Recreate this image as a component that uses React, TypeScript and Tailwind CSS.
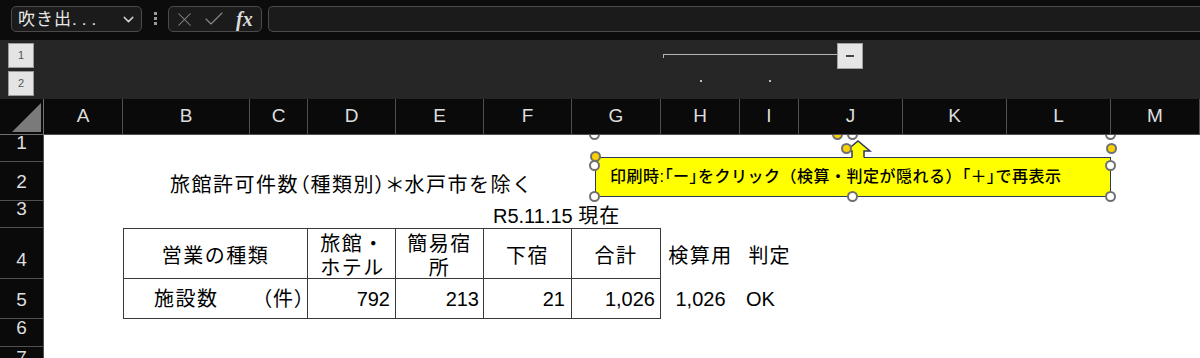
import React from "react";
import { ChevronDown, X, Check } from "lucide-react";

const hdr =
  "flex items-center justify-center border-r border-b border-[#505050] bg-[#0a0a0a] text-[#dedede] text-[19px]";
const rowh =
  "flex items-end justify-center pb-[8px] border-r border-b border-[#505050] bg-[#0a0a0a] text-[#dedede] text-[19px] leading-[20px]";
const palt = "[font-feature-settings:'palt']";

function FormulaBar() {
  return (
    <div className="h-[40px] flex items-start pt-[6px] pl-[11px] bg-[#0c0c0c]">
      <div className="w-[131px] h-[26px] rounded-[5px] border border-[#4a4a4a] bg-[#1b1b1b] flex items-center justify-between pl-[6px] pr-[4px]">
        <span className="text-[17px] leading-none text-[#e8e8e8] tracking-[1px]">
          吹き出<span className="tracking-[5px]">...</span>
        </span>
        <ChevronDown size={17} strokeWidth={2} className="text-[#d0d0d0]" />
      </div>
      <div className="ml-[12px] mt-[6px] flex flex-col gap-[2px]">
        <div className="w-[3px] h-[3px] bg-[#9a9a9a]" />
        <div className="w-[3px] h-[3px] bg-[#9a9a9a]" />
        <div className="w-[3px] h-[3px] bg-[#9a9a9a]" />
      </div>
      <div className="ml-[11px] w-[94px] h-[26px] rounded-[5px] border border-[#4a4a4a] bg-[#1b1b1b] flex items-center pl-[4px] gap-[6px]">
        <X size={23} strokeWidth={1.1} className="text-[#8a8a8a]" />
        <Check size={24} strokeWidth={1.1} className="text-[#8a8a8a]" />
        <span className="font-['Liberation_Serif',serif] italic font-bold text-[20px] leading-none text-[#dcdcdc] ml-[4px]">
          fx
        </span>
      </div>
      <div className="ml-[6px] flex-1 h-[26px] rounded-l-[5px] border border-r-0 border-[#4a4a4a] bg-[#1b1b1b]" />
    </div>
  );
}

function LevelBtn({ children }: { children: React.ReactNode }) {
  return (
    <div className="w-[26px] h-[25px] bg-[#e4e4e4] border border-[#9a9a9a] flex items-center justify-center text-[11px] text-[#555]">
      {children}
    </div>
  );
}

function Outline() {
  return (
    <div className="h-[59px] bg-[#262626] flex">
      <div className="w-[44px] flex flex-col gap-[3px] pt-[3px] pl-[8px]">
        <LevelBtn>1</LevelBtn>
        <LevelBtn>2</LevelBtn>
      </div>
      <div className="flex-1 flex flex-col">
        <div className="h-[29px] flex items-start pl-[619px]">
          <div className="mt-[14px] w-[174px] h-[4px] border-t-[1.5px] border-l-[1.5px] border-[#b4b4b4]" />
          <div className="mt-[3px] w-[26px] h-[26px] bg-[#e6e6e6] border border-[#a0a0a0] flex items-center justify-center">
            <div className="w-[8px] h-[1.5px] bg-[#444]" />
          </div>
        </div>
        <div className="flex pl-[656px] gap-[67px] pt-[11px]">
          <div className="w-[2px] h-[2px] bg-[#bdbdbd]" />
          <div className="w-[2px] h-[2px] bg-[#bdbdbd]" />
        </div>
      </div>
    </div>
  );
}

function Callout() {
  const white =
    "absolute w-[11px] h-[11px] rounded-full bg-white border-2 border-[#707070]";
  const yellow =
    "absolute w-[11px] h-[11px] rounded-full bg-[#f7d100] border-2 border-[#707070]";
  return (
    <div className="absolute left-[44px] top-[36px] right-0 bottom-0 overflow-hidden pointer-events-none">
      <div className="absolute left-[551px] top-[22px] w-[516px] h-[40px] bg-[#ffff00] border-[1.5px] border-[#2c3a5c] flex items-center pl-[14px]">
        <span className="text-[16px] font-medium text-black whitespace-nowrap tracking-[0.5px]">
          印刷時:<span className={palt}>「</span>ー<span className={palt}>」</span>をクリック（検算・判定が隠れる）<span className={palt}>「</span>＋<span className={palt}>」</span>で再表示
        </span>
      </div>
      <svg
        className="absolute left-[796px] top-[3px]"
        width="36"
        height="22"
        viewBox="0 0 36 22"
      >
        <polygon
          points="12,21 12,13 6,13 18,3 30,13 24,13 24,21"
          fill="#ffff00"
        />
        <polyline
          points="12,19.6 12,13 6,13 18,3 30,13 24,13 24,19.6"
          fill="none"
          stroke="#2c3a5c"
          strokeWidth="1.5"
        />
      </svg>
      <div className={`${white} left-[545px] top-[-6px]`} />
      <div className={`${white} left-[803px] top-[-6px]`} />
      <div className={`${white} left-[1061px] top-[-6px]`} />
      <div className={`${white} left-[545px] top-[25px]`} />
      <div className={`${white} left-[1061px] top-[25px]`} />
      <div className={`${white} left-[545px] top-[56px]`} />
      <div className={`${white} left-[803px] top-[56px]`} />
      <div className={`${white} left-[1061px] top-[56px]`} />
      <div className={`${yellow} left-[546px] top-[16px]`} />
      <div className={`${yellow} left-[1062px] top-[8px]`} />
      <div className={`${yellow} left-[788px] top-[-6px]`} />
      <div className={`${yellow} left-[797px] top-[8px]`} />
    </div>
  );
}

function Sheet() {
  const letters = ["A", "B", "C", "D", "E", "F", "G", "H", "I", "J", "K", "L", "M"];
  const tb = "border-[#3a3a3a]";
  const cjk = "text-[20px] tracking-[1.5px] text-black";
  const num = "text-[20px] text-black";
  return (
    <div className="relative">
      <div className="grid grid-cols-[44px_79px_127px_58px_88px_88px_88px_89px_79px_59px_104px_104px_104px_1fr] grid-rows-[36px_27px_39px_27px_51px_40px_28px_40px] bg-white">
        {/* header row */}
        <div className="relative border-r border-b border-[#707070] bg-[#0a0a0a]">
          <svg className="absolute left-[12px] top-[4px]" width="30" height="30" viewBox="0 0 30 30">
            <polygon points="29,0 29,29 0,29" fill="#7a7a7a" />
          </svg>
        </div>
        {letters.map((l) => (
          <div key={l} className={hdr}>
            {l}
          </div>
        ))}

        {/* row 1 */}
        <div className={rowh}>1</div>
        <div className="col-span-13" />

        {/* row 2 */}
        <div className={rowh}>2</div>
        <div />
        <div className="col-span-12 flex items-start pt-[13px] pl-[47px]">
          <span className={`${cjk} leading-[20px] whitespace-nowrap`}>
            旅館許可件数<span className={palt}>（</span>種類別<span className={palt}>）＊</span>水戸市を除く
          </span>
        </div>

        {/* row 3 */}
        <div className={rowh}>3</div>
        <div className="col-span-5" />
        <div className="col-span-8 flex items-start pt-[5px] pl-[9px]">
          <span className={`${num} leading-[20px] whitespace-nowrap`}>
            R5.11.15 <span className="tracking-[1px]">現在</span>
          </span>
        </div>

        {/* row 4 */}
        <div className={rowh}>4</div>
        <div />
        <div className={`col-span-2 border-l border-t border-r border-b ${tb} flex items-center justify-center pt-[6px]`}>
          <span className={`${cjk} leading-[23.5px]`}>営業の種類</span>
        </div>
        <div className={`border-t border-r border-b ${tb} flex flex-col items-center justify-center pt-[6px] pl-[2px]`}>
          <span className={`${cjk} leading-[23.5px]`}>旅館・</span>
          <span className={`${cjk} leading-[23.5px]`}>ホテル</span>
        </div>
        <div className={`border-t border-r border-b ${tb} flex flex-col items-center justify-center pt-[6px]`}>
          <span className={`${cjk} leading-[23.5px]`}>簡易宿</span>
          <span className={`${cjk} leading-[23.5px]`}>所</span>
        </div>
        <div className={`border-t border-r border-b ${tb} flex items-center justify-center pt-[6px]`}>
          <span className={`${cjk} leading-[23.5px]`}>下宿</span>
        </div>
        <div className={`border-t border-r border-b ${tb} flex items-center justify-center pt-[6px]`}>
          <span className={`${cjk} leading-[23.5px]`}>合計</span>
        </div>
        <div className="flex items-center justify-center pt-[6px]">
          <span className={`${cjk} leading-[23.5px] tracking-[0px]`}>検算用</span>
        </div>
        <div className="flex items-center justify-center pt-[6px]">
          <span className={`${cjk} leading-[23.5px] tracking-[1px]`}>判定</span>
        </div>
        <div className="col-span-4" />

        {/* row 5 */}
        <div className={rowh}>5</div>
        <div />
        <div className={`col-span-2 border-l border-r border-b ${tb} flex items-center pl-[30px]`}>
          <span className={`${cjk} leading-[22px] whitespace-nowrap`}>
            施設数　<span className={palt}>　（</span>件<span className={palt}>）</span>
          </span>
        </div>
        <div className={`border-r border-b ${tb} flex items-center justify-end pr-[5px]`}>
          <span className={num}>792</span>
        </div>
        <div className={`border-r border-b ${tb} flex items-center justify-end pr-[4px]`}>
          <span className={num}>213</span>
        </div>
        <div className={`border-r border-b ${tb} flex items-center justify-end pr-[6px]`}>
          <span className={num}>21</span>
        </div>
        <div className={`border-r border-b ${tb} flex items-center justify-end pr-[5px]`}>
          <span className={num}>1,026</span>
        </div>
        <div className="flex items-center justify-center">
          <span className={num}>1,026</span>
        </div>
        <div className="flex items-center pl-[6px]">
          <span className={num}>OK</span>
        </div>
        <div className="col-span-4" />

        {/* row 6 */}
        <div className={rowh}>6</div>
        <div className="col-span-13" />

        {/* row 7 */}
        <div className={`${rowh} items-start pt-[1px]`}>7</div>
        <div className="col-span-13" />
      </div>
      <Callout />
    </div>
  );
}

export default function App() {
  return (
    <div className="w-[1200px] h-[358px] overflow-hidden bg-[#0c0c0c] font-['Liberation_Sans','Noto_Sans_CJK_JP',sans-serif]">
      <FormulaBar />
      <Outline />
      <Sheet />
    </div>
  );
}
